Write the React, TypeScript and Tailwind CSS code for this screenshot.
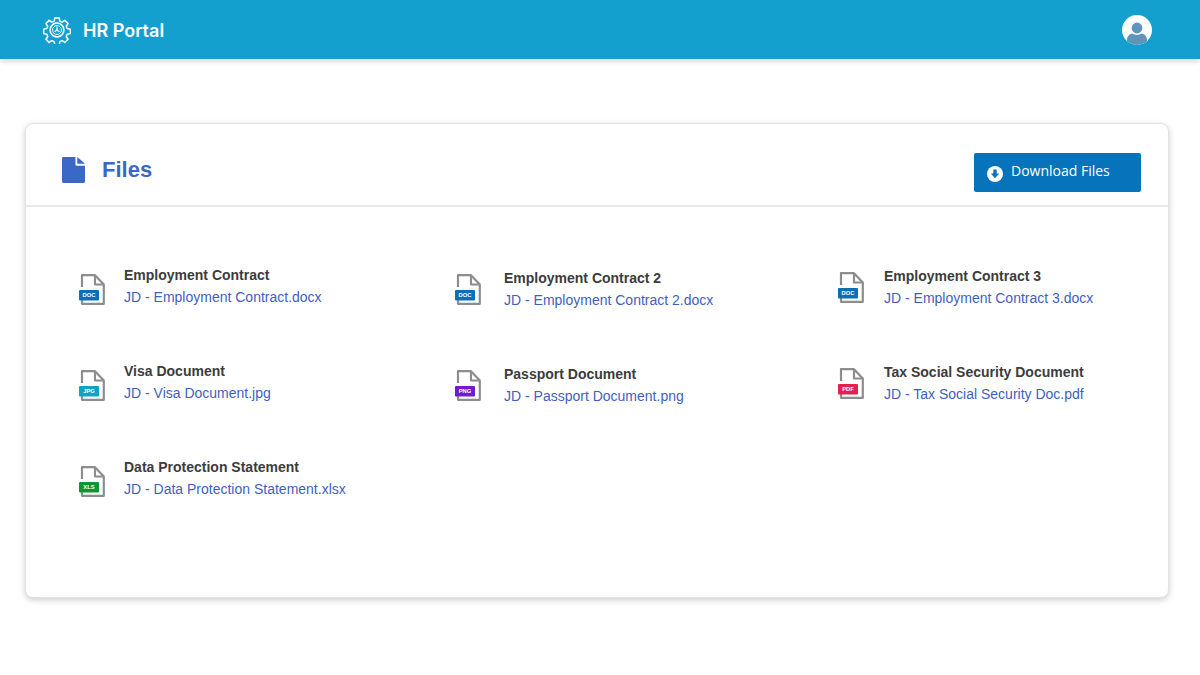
import React from "react";

type FileItem = { title: string; link: string; label: string; color: string; cell: string; icon: string; gap: string };

const files: FileItem[] = [
  { title: "Employment Contract", link: "JD - Employment Contract.docx", label: "DOC", color: "#0b6fb8", cell: "pt-0", icon: "ml-0 mt-[7px]", gap: "gap-[18px]" },
  { title: "Employment Contract 2", link: "JD - Employment Contract 2.docx", label: "DOC", color: "#0b6fb8", cell: "pt-[3px]", icon: "ml-0 mt-[4px]", gap: "gap-[22px]" },
  { title: "Employment Contract 3", link: "JD - Employment Contract 3.docx", label: "DOC", color: "#0b6fb8", cell: "pt-px", icon: "ml-[3px] mt-[4px]", gap: "gap-[19px]" },
  { title: "Visa Document", link: "JD - Visa Document.jpg", label: "JPG", color: "#12a3c4", cell: "pt-0", icon: "ml-0 mt-[7px]", gap: "gap-[18px]" },
  { title: "Passport Document", link: "JD - Passport Document.png", label: "PNG", color: "#6a1fc9", cell: "pt-[3px]", icon: "ml-0 mt-[4px]", gap: "gap-[22px]" },
  { title: "Tax Social Security Document", link: "JD - Tax Social Security Doc.pdf", label: "PDF", color: "#e3214f", cell: "pt-px", icon: "ml-[3px] mt-[4px]", gap: "gap-[19px]" },
  { title: "Data Protection Statement", link: "JD - Data Protection Statement.xlsx", label: "XLS", color: "#0f9433", cell: "pt-0", icon: "ml-0 mt-[7px]", gap: "gap-[18px]" },
];

function FileIcon({ label, color }: { label: string; color: string }) {
  return (
    <svg width="27" height="33" viewBox="0 0 27 33" className="shrink-0 block">
      <path d="M3 14V2.200h13L24.800 11.500v19.300H3V27" fill="#fff" stroke="#8d8d8d" strokeWidth="2.200" strokeLinejoin="round" />
      <path d="M16 2.200v9.300h8.800" fill="none" stroke="#8d8d8d" strokeWidth="2.200" strokeLinejoin="round" />
      <rect x="0" y="17" width="20" height="10.500" rx="1" fill={color} />
      <text x="10" y="24.400" textAnchor="middle" fontSize="5.800" fontWeight="700" fill="#fff" fontFamily="'Liberation Sans', sans-serif">{label}</text>
    </svg>
  );
}

function Gear() {
  return (
    <svg width="28" height="28" viewBox="0 0 30 30" fill="none" stroke="#fff" strokeWidth="1.600" strokeLinejoin="round" strokeLinecap="round" className="block">
      <path d="M12.600 2.200h4.800l.7 3.400 2.400 1 2.900-1.900 3.400 3.400-1.900 2.900 1 2.400 3.400.7v4.800l-3.400.7-1 2.400 1.900 2.900-3.400 3.400-2.900-1.900-2.400 1-.7 3.400h-4.800l-.7-3.400-2.400-1-2.900 1.900-3.400-3.400 1.900-2.900-1-2.400-3.400-.7v-4.800l3.400-.7 1-2.400-1.900-2.900 3.400-3.400 2.900 1.900 2.400-1z" />
      <circle cx="15" cy="15" r="7.400" />
      <circle cx="15" cy="15" r="4.800" strokeWidth="1" />
      <path d="M15 11.800V15l2.200 1.600M15 15l-2.200 1.600" strokeWidth="1.300" />
    </svg>
  );
}

export default function App() {
  return (
    <div className="min-h-[675px] bg-white font-['Liberation_Sans',Arial,sans-serif]">
      <header className="h-[59px] bg-[#14a0cf] shadow-[0_2px_6px_rgba(0,0,0,0.18)] flex items-center justify-between pl-[43px] pr-[48px]">
        <div className="flex items-center gap-[12px]">
          <Gear />
          <span className="mt-[2px] text-white text-[18px] font-semibold font-['Inter',sans-serif] leading-none">HR Portal</span>
        </div>
        <svg width="30" height="30" viewBox="0 0 30 30" className="block">
          <defs>
            <clipPath id="avatar"><circle cx="15" cy="15" r="15" /></clipPath>
          </defs>
          <circle cx="15" cy="15" r="15" fill="#fff" />
          <g clipPath="url(#avatar)">
            <circle cx="15" cy="13" r="5.400" fill="#5e95b8" />
            <path d="M5 30v-5c0-4 3-6.200 5.600-6.400 1.400 1 2.800 1.400 4.400 1.400s3-.4 4.400-1.400C22 18.800 25 21 25 25v5z" fill="#5e95b8" />
          </g>
        </svg>
      </header>

      <main className="pt-[64px] pl-[25px]">
        <section className="w-[1144px] h-[475px] bg-white border border-[#e2e2e2] rounded-[8px] shadow-[0_2px_6px_rgba(0,0,0,0.2)]">
          <div className="h-[83px] -mr-[2px] border-b-2 border-[#e8e8e8] flex justify-between pl-[36px] pr-[29px]">
            <div className="flex items-center gap-[17px] h-[92px]">
              <svg width="23" height="26" viewBox="0 0 24 27" className="block">
                <path d="M1.500 0H14v7.500c0 .8.700 1.500 1.500 1.500H24v16.500c0 .8-.700 1.500-1.500 1.500h-21C.700 27 0 26.300 0 25.500v-24C0 .700.700 0 1.500 0z" fill="#3b68c7" />
                <path d="M16 0l8 7h-8z" fill="#3b68c7" />
              </svg>
              <h1 className="text-[22px] font-bold text-[#3b68c4] leading-none">Files</h1>
            </div>
            <button className="mt-[29px] w-[167px] h-[39px] bg-[#0773bb] rounded-[2px] text-white flex items-center pl-[13px] gap-[8px] font-['Open_Sans',sans-serif] text-[14px]">
              <svg width="16" height="16" viewBox="0 0 16 16" className="block mt-[3px]">
                <circle cx="8" cy="8" r="8" fill="#fff" />
                <path d="M6.300 3.500h3.400v4h2.500L8 12.200 3.800 7.500h2.500z" fill="#0773bb" />
              </svg>
              <span className="-mt-[5px]">Download Files</span>
            </button>
          </div>

          <div className="grid grid-cols-[376px_380px_380px] auto-rows-[96px] pl-[53px] pt-[59px]">
            {files.map((f) => (
              <div key={f.title} className={`${f.cell} flex items-start ${f.gap}`}>
                <div className={f.icon}>
                  <FileIcon label={f.label} color={f.color} />
                </div>
                <div>
                  <div className="text-[14px] leading-[18px] font-bold text-[#3c3c3c]">{f.title}</div>
                  <div className="text-[14px] leading-[18px] mt-[4px] text-[#3f5fbe]">{f.link}</div>
                </div>
              </div>
            ))}
          </div>
        </section>
      </main>
    </div>
  );
}
